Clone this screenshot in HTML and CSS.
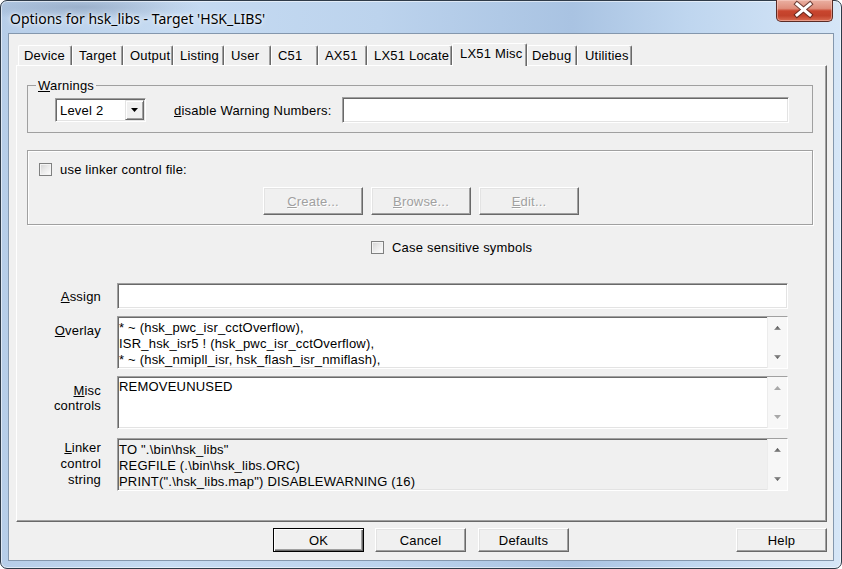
FILE: index.html
```html
<!DOCTYPE html>
<html>
<head>
<meta charset="utf-8">
<title>Options for hsk_libs</title>
<link rel="stylesheet" href="styles.css">
</head>
<body>
<div class="window">
  <div class="titlebar">
    <div class="title">Options for hsk_libs - Target 'HSK_LIBS'</div>
    <div class="close">
      <svg width="57" height="22" viewBox="0 0 57 22">
        <path d="M22 5 L35 16 M35 5 L22 16" stroke="#4a1f1a" stroke-width="5" stroke-linecap="square" fill="none" opacity="0.75"/>
        <path d="M22 5 L35 16 M35 5 L22 16" stroke="#ffffff" stroke-width="3" stroke-linecap="square" fill="none"/>
      </svg>
    </div>
  </div>
  <div class="client">
    <div class="tabs">
      <div class="tab w-device">Device</div>
      <div class="tab w-target">Target</div>
      <div class="tab w-output">Output</div>
      <div class="tab w-listing">Listing</div>
      <div class="tab w-user">User</div>
      <div class="tab w-c51">C51</div>
      <div class="tab w-ax51">AX51</div>
      <div class="tab w-locate">LX51 Locate</div>
      <div class="tab active w-misc">LX51 Misc</div>
      <div class="tab w-debug">Debug</div>
      <div class="tab w-util">Utilities</div>
    </div>
    <div class="panel">
      <fieldset class="group warnings">
        <legend><u>W</u>arnings</legend>
        <div class="warn-row">
          <div class="combo sunken">
            <span class="combo-text">Level 2</span>
            <span class="combo-btn">
              <svg width="7" height="4" viewBox="0 0 7 4"><polygon points="0,0 7,0 3.5,4" fill="#000"/></svg>
            </span>
          </div>
          <span class="dwn-label"><u>d</u>isable Warning Numbers:</span>
          <div class="input sunken"></div>
        </div>
      </fieldset>

      <div class="group linkfile">
        <div class="cb-row">
          <span class="checkbox"></span>
          <span class="cb-label">use linker control file:</span>
        </div>
        <div class="lf-buttons">
          <div class="btn disabled"><u>C</u>reate...</div>
          <div class="btn disabled"><u>B</u>rowse...</div>
          <div class="btn disabled"><u>E</u>dit...</div>
        </div>
      </div>

      <div class="cb-row case-row">
        <span class="checkbox"></span>
        <span class="cb-label">Case sensitive symbols</span>
      </div>

      <div class="form">
        <div class="lbl lbl-assign"><u>A</u>ssign</div>
        <div class="field sunken f-assign"></div>

        <div class="lbl lbl-overlay"><u>O</u>verlay</div>
        <div class="field sunken f-multi">
          <div class="ftext">* ~ (hsk_pwc_isr_cctOverflow),<br>ISR_hsk_isr5 ! (hsk_pwc_isr_cctOverflow),<br>* ~ (hsk_nmipll_isr, hsk_flash_isr_nmiflash),</div>
          <div class="sb">
            <svg width="7" height="4" viewBox="0 0 7 4"><defs><linearGradient id="ua" x1="0" y1="0" x2="0" y2="1"><stop offset="0" stop-color="#3a3a3a"/><stop offset="1" stop-color="#9a9a9a"/></linearGradient></defs><polygon points="3.5,0 7,4 0,4" fill="url(#ua)"/></svg>
            <svg width="7" height="4" viewBox="0 0 7 4"><defs><linearGradient id="da" x1="0" y1="0" x2="0" y2="1"><stop offset="0" stop-color="#9a9a9a"/><stop offset="1" stop-color="#4a4a4a"/></linearGradient></defs><polygon points="0,0 7,0 3.5,4" fill="url(#da)"/></svg>
          </div>
        </div>

        <div class="lbl lbl-misc"><u>M</u>isc<br>controls</div>
        <div class="field sunken f-multi">
          <div class="ftext f-misc">REMOVEUNUSED</div>
          <div class="sb">
            <svg width="7" height="4" viewBox="0 0 7 4"><polygon points="3.5,0 7,4 0,4" fill="#a8a8a8"/></svg>
            <svg width="7" height="4" viewBox="0 0 7 4"><polygon points="0,0 7,0 3.5,4" fill="#a8a8a8"/></svg>
          </div>
        </div>

        <div class="lbl lbl-linker"><u>L</u>inker<br>control<br>string</div>
        <div class="field sunken f-multi f-readonly">
          <div class="ftext">TO ".\bin\hsk_libs"<br>REGFILE (.\bin\hsk_libs.ORC)<br>PRINT(".\hsk_libs.map") DISABLEWARNING (16)</div>
          <div class="sb">
            <svg width="7" height="4" viewBox="0 0 7 4"><defs><linearGradient id="ua2" x1="0" y1="0" x2="0" y2="1"><stop offset="0" stop-color="#3a3a3a"/><stop offset="1" stop-color="#9a9a9a"/></linearGradient></defs><polygon points="3.5,0 7,4 0,4" fill="url(#ua2)"/></svg>
            <svg width="7" height="4" viewBox="0 0 7 4"><defs><linearGradient id="da2" x1="0" y1="0" x2="0" y2="1"><stop offset="0" stop-color="#9a9a9a"/><stop offset="1" stop-color="#4a4a4a"/></linearGradient></defs><polygon points="0,0 7,0 3.5,4" fill="url(#da2)"/></svg>
          </div>
        </div>
      </div>
    </div>
    <div class="buttons">
      <div class="btn dlg default">OK</div>
      <div class="btn dlg b-cancel">Cancel</div>
      <div class="btn dlg b-defaults">Defaults</div>
      <div class="btn dlg b-help">Help</div>
    </div>
  </div>
</div>
</body>
</html>
```

FILE: styles.css
```css
* { box-sizing: border-box; }
html, body { margin: 0; padding: 0; }
body {
  width: 842px;
  height: 569px;
  overflow: hidden;
  background: #ffffff;
  font-family: "Liberation Sans", Arial, sans-serif;
  font-size: 13px;
  letter-spacing: 0.2px;
  color: #000;
}

.window {
  width: 842px;
  height: 569px;
  border: 1px solid #2f3b49;
  border-radius: 7px;
  padding: 0 7px 7px 7px;
  display: flex;
  flex-direction: column;
  background:
    radial-gradient(ellipse 120px 14px at 80px 6px, rgba(90,110,140,0.35), rgba(90,110,140,0) 100%),
    linear-gradient(90deg, #b6cde8 0%, #c6dbf2 20%, #bcd3ed 45%, #a9c3e2 68%, #bfd6ef 82%, #d6e6f7 100%);
  box-shadow: inset 0 0 0 1px rgba(255,255,255,0.55);
}

.titlebar {
  height: 32px;
  display: flex;
  align-items: flex-start;
}
.title {
  margin: 8px 0 0 2px;
  font-family: "Noto Sans", "Segoe UI", sans-serif;
  font-size: 14px;
  letter-spacing: 0;
  line-height: 20px;
  color: #000;
  text-shadow: 0 0 6px rgba(255,255,255,0.9), 0 0 3px rgba(255,255,255,0.9);
}
.close {
  margin-left: auto;
  margin-right: 1px;
  margin-top: -1px;
  width: 57px;
  height: 22px;
  border: 1px solid #5a2b25;
  border-top: none;
  border-radius: 0 0 5px 5px;
  background: linear-gradient(180deg, #eab0a2 0%, #df8e7c 40%, #c9452e 52%, #c2422b 75%, #da6c52 100%);
  box-shadow: inset 0 0 0 1px rgba(255,220,210,0.45);
  display: flex;
  align-items: center;
  justify-content: center;
}
.close svg { display: block; margin-left: -2px; margin-top: -1px; }

.client {
  flex: 1;
  background: #f0f0f0;
  border: 1px solid #8497ad;
  padding: 9px 6px 0 7px;
  display: flex;
  flex-direction: column;
}

/* tabs */
.tabs {
  display: flex;
  align-items: flex-end;
  height: 22px;
  margin-left: 2px;
}
.tab {
  height: 20px;
  line-height: 19px;
  padding-left: 6px;
  white-space: nowrap;
  background: #f0f0f0;
  border-top: 1px solid #ffffff;
  border-left: 1px solid #ffffff;
  border-right: 1px solid #696969;
  box-shadow: inset -1px 0 0 #a0a0a0;
  border-radius: 2px 2px 0 0;
}
.tab.active {
  height: 23px;
  margin-bottom: -1px;
  position: relative;
  z-index: 1;
  padding-left: 7px;
}
.w-device { width: 54px; padding-left: 5px; }
.w-target { width: 51px; }
.w-output { width: 50px; }
.w-listing { width: 51px; }
.w-user { width: 47px; }
.w-c51 { width: 47px; }
.w-ax51 { width: 49px; }
.w-locate { width: 85px; }
.w-misc { width: 75px; }
.w-debug { width: 50px; padding-left: 4px; }
.w-util { width: 55px; padding-left: 7px; }

/* panel */
.panel {
  height: 457px;
  border-top: 1px solid #ffffff;
  border-left: 1px solid #ffffff;
  border-right: 1px solid #696969;
  border-bottom: 1px solid #696969;
  box-shadow: inset -1px -1px 0 #a0a0a0;
  padding: 12px 13px 0 10px;
}

.group {
  border: 1px solid #a0a0a0;
  margin: 0;
}
fieldset.group {
  padding: 4px 23px 9px 27px;
  min-width: 0;
}
legend {
  padding: 0 2px;
  margin-left: -19px;
  line-height: 15px;
}
.warn-row {
  display: flex;
  align-items: center;
  height: 26px;
}

.sunken {
  border: 1px solid;
  border-color: #a0a0a0 #ffffff #ffffff #a0a0a0;
  box-shadow: inset 1px 1px 0 #696969, inset -1px -1px 0 #e3e3e3;
  background: #ffffff;
}

.combo {
  width: 91px;
  height: 24px;
  display: flex;
  align-items: center;
  padding: 1px;
}
.combo-text {
  flex: 1;
  padding-left: 3px;
  line-height: 15px;
}
.combo-btn {
  width: 19px;
  height: 20px;
  background: #f0f0f0;
  border: 1px solid;
  border-color: #e3e3e3 #696969 #696969 #e3e3e3;
  box-shadow: inset 1px 1px 0 #ffffff, inset -1px -1px 0 #a0a0a0;
  display: flex;
  align-items: center;
  justify-content: center;
}
.combo-btn svg { display: block; }

.dwn-label {
  margin-left: 28px;
  width: 168px;
  flex: none;
  white-space: nowrap;
}
.input {
  flex: 1;
  height: 26px;
}

/* linker control file group */
.linkfile {
  margin-top: 17px;
  padding: 11px 0 9px 11px;
  box-shadow: inset 1px 1px 0 #ffffff, 1px 1px 0 #ffffff;
}
.cb-row {
  display: flex;
  align-items: center;
  height: 15px;
}
.checkbox {
  width: 13px;
  height: 13px;
  flex: none;
  border: 1px solid #7f8080;
  background: linear-gradient(135deg, #d2d2d2 0%, #e9e9e9 45%, #ffffff 100%);
  box-shadow: inset 0 0 0 1px #f4f4f4;
}
.cb-label {
  margin-left: 8px;
  white-space: nowrap;
}
.lf-buttons {
  display: flex;
  margin-top: 10px;
  margin-left: 224px;
  gap: 8px;
}

.btn {
  display: flex;
  align-items: center;
  justify-content: center;
  background: #f0f0f0;
  border: 1px solid;
  border-color: #ffffff #696969 #696969 #ffffff;
  box-shadow: inset -1px -1px 0 #a0a0a0, inset 1px 1px 0 #e3e3e3;
  white-space: nowrap;
}
.btn.disabled {
  width: 100px;
  height: 28px;
  color: #a0a0a0;
  text-shadow: 1px 1px 0 #ffffff;
}

.case-row {
  margin-top: 15px;
  margin-left: 344px;
}

/* form */
.form {
  margin-top: 28px;
  display: grid;
  grid-template-columns: 74px 671px;
  column-gap: 16px;
  row-gap: 7px;
}
.lbl {
  text-align: right;
  line-height: 15px;
  white-space: nowrap;
}
.lbl-assign { padding-top: 6px; }
.lbl-overlay { padding-top: 7px; }
.lbl-misc { padding-top: 7px; }
.lbl-linker { padding-top: 2px; line-height: 16px; margin-top: 2px; }

.field { display: flex; }
.f-assign { height: 26px; }
.f-multi { height: 53px; }
.f-readonly { background: #f0f0f0; margin-top: 2px; }
.ftext {
  flex: 1;
  padding: 3px 0 0 1px;
  line-height: 16px;
  white-space: nowrap;
  overflow: hidden;
}
.f-misc { padding-top: 2px; }
.sb {
  width: 20px;
  flex: none;
  background: #f7f7f7;
  border-left: 1px solid #ececec;
  display: flex;
  flex-direction: column;
  justify-content: space-between;
  align-items: center;
  padding: 9px 0 9px 0;
}
.sb svg { display: block; }

/* dialog buttons */
.buttons {
  display: flex;
  margin-top: 6px;
  height: 24px;
  padding-left: 257px;
}
.btn.dlg {
  width: 91px;
  height: 24px;
}
.btn.default {
  border: 1px solid #000000;
  box-shadow: inset 1px 1px 0 #ffffff, inset -1px -1px 0 #696969, inset -2px -2px 0 #a0a0a0;
}
.b-cancel { margin-left: 11px; }
.b-defaults { margin-left: 12px; }
.b-help { margin-left: auto; }
```
